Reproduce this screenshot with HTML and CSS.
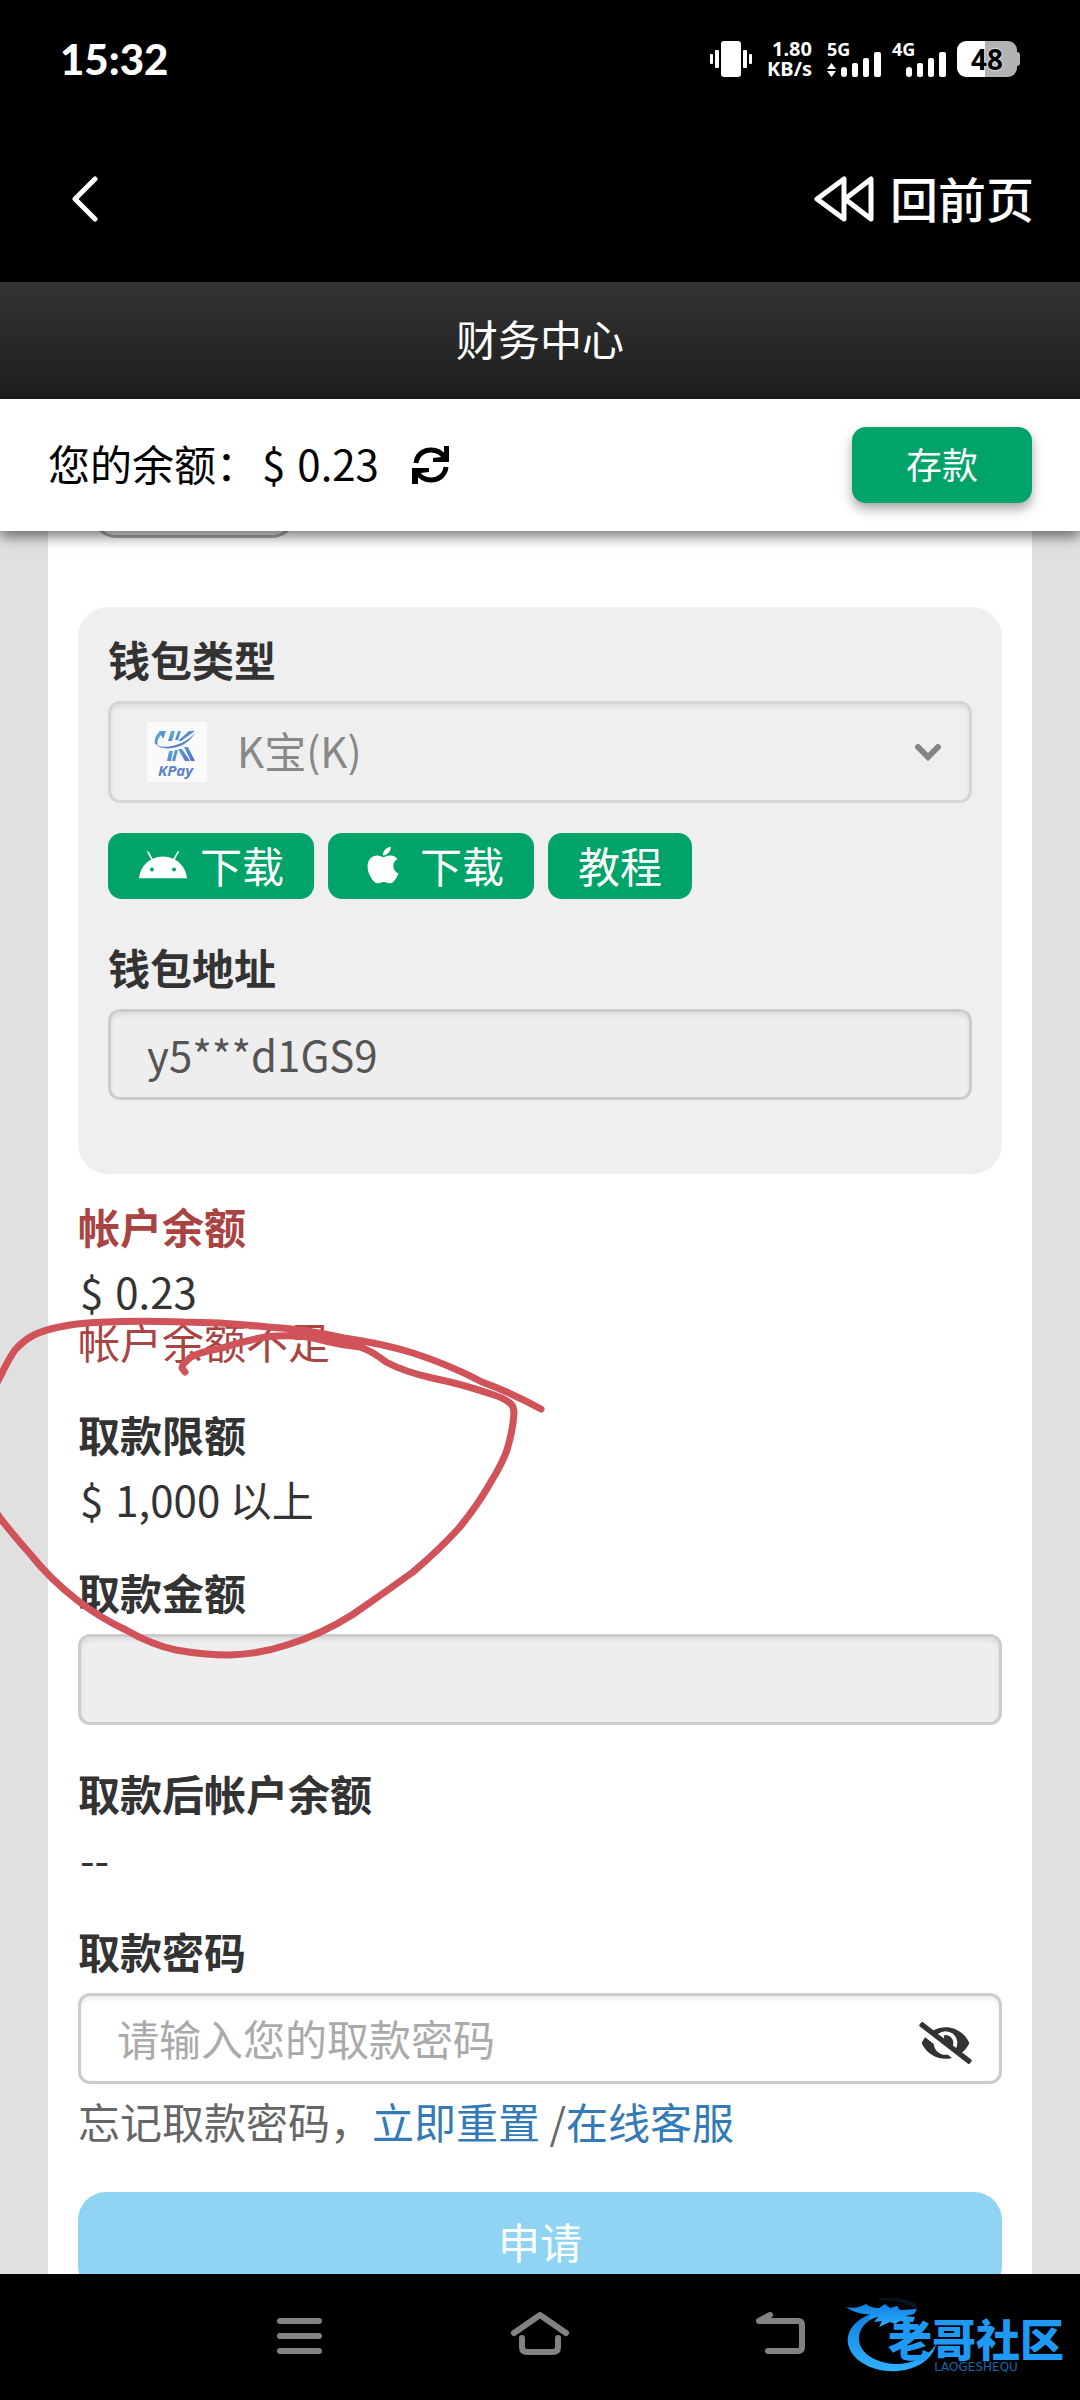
FILE: index.html
```html
<!DOCTYPE html>
<html lang="zh-CN">
<head>
    <meta charset="UTF-8">
    <meta name="viewport" content="width=device-width, initial-scale=1.0">
    <title>财务中心</title>
    <link rel="stylesheet" href="styles.css">
</head>
<body>
    <div class="status-bar">
        <span class="clock">15:32</span>
        <div class="status-icons">
            <svg width="42" height="36" viewBox="0 0 42 36" fill="#fff">
                <rect x="11" y="0" width="20" height="36" rx="3"/>
                <rect x="5" y="9" width="4" height="18" rx="1"/>
                <rect x="0" y="13" width="3" height="10" rx="1"/>
                <rect x="33" y="9" width="4" height="18" rx="1"/>
                <rect x="39" y="13" width="3" height="10" rx="1"/>
            </svg>
            <div class="net-speed"><span>1.80</span><span>KB/s</span></div>
            <div class="signal">
                <span class="signal-type">5G</span>
                <svg width="54" height="26" viewBox="0 0 54 26" fill="#fff">
                    <path d="M0 18l4.500-6 4.500 6zM0 20h9l-4.500 6z"/>
                    <rect x="14" y="16" width="6" height="10" rx="3"/>
                    <rect x="25" y="12" width="6" height="14" rx="2"/>
                    <rect x="36" y="7" width="6" height="19" rx="2"/>
                    <rect x="47" y="1" width="7" height="25" rx="2"/>
                </svg>
            </div>
            <div class="signal">
                <span class="signal-type">4G</span>
                <svg width="54" height="26" viewBox="0 0 54 26" fill="#fff">
                    <rect x="14" y="16" width="6" height="10" rx="3"/>
                    <rect x="25" y="12" width="6" height="14" rx="2"/>
                    <rect x="36" y="7" width="6" height="19" rx="2"/>
                    <rect x="47" y="1" width="7" height="25" rx="2"/>
                </svg>
            </div>
            <div class="battery">48</div>
        </div>
    </div>

    <div class="app-bar">
        <button class="icon-button" aria-label="返回">
            <svg width="30" height="46" viewBox="0 0 30 46" fill="none" stroke="#fff" stroke-width="5" stroke-linecap="round" stroke-linejoin="round">
                <path d="M25 3L5 23l20 20"/>
            </svg>
        </button>
        <a class="prev-page" href="#">
            <svg width="60" height="46" viewBox="0 0 60 46" fill="none" stroke="#fff" stroke-width="5" stroke-linecap="round" stroke-linejoin="round">
                <path d="M30 3v40L3 23zM57 3v40L31 23z"/>
            </svg>
            <span class="prev-page-text">回前页</span>
        </a>
    </div>

    <h1 class="page-title">财务中心</h1>

    <div class="balance-bar">
        <div class="balance">
            <span>您的余额：</span>
            <span>$</span>
            <span class="amount">0.23</span>
        </div>
        <button class="icon-button" aria-label="刷新">
            <svg width="38" height="38" viewBox="0 0 38 38">
                <g fill="none" stroke="#000" stroke-width="5">
                    <path d="M4 17C5 9 11 4 19 4c6 0 11 3 14 8"/>
                    <path d="M34 21c-1 8-7 13-15 13-6 0-11-3-14-8"/>
                </g>
                <path d="M32 0h5v16H21v-4l8-1 3-4zM6 38H0V22h17v4l-8 1-3 4z"/>
            </svg>
        </button>
        <button class="deposit">存款</button>
    </div>

    <main class="content">
        <form class="panel">
            <button class="add-wallet" type="button" aria-label="钱包"></button>

            <div class="wallet-card">
                <label class="label" for="wallet-type">钱包类型</label>
                <div class="select-box">
                    <svg width="60" height="60" viewBox="0 0 60 60">
                        <defs>
                            <linearGradient id="kpay-blue" x1="0" y1="0" x2="1" y2="1">
                                <stop offset="0" stop-color="#55b8d8"/>
                                <stop offset="1" stop-color="#5668c8"/>
                            </linearGradient>
                        </defs>
                        <rect width="60" height="60" fill="#fafafa"/>
                        <g fill="url(#kpay-blue)">
                            <path d="M8 22C7 16 10 11 13 10l-2-1h8l-3 8-2-4c-4 4-4 8-3 10z"/>
                            <path d="M8 23c15 5 31-2 40-12C41 24 22 31 8 23z"/>
                            <path d="M24 9h4l-3 10h-4zM31 9h3l-3 9h-3zM42 9h6l-14 10h-3z"/>
                            <path d="M22 29h4l-2 10h-4zM28 28h3l-3 11h-3zM31 27h4l8 12h-5zM37 25h4l7 14h-4z"/>
                        </g>
                        <text class="kpay-name" x="11" y="54">KPay</text>
                    </svg>
                    <select id="wallet-type" disabled>
                        <option>K宝(K)</option>
                    </select>
                    <svg width="28" height="20" viewBox="0 0 28 20" fill="none" stroke="#848484" stroke-width="6" stroke-linecap="round">
                        <path d="M4 5l10 10L24 5"/>
                    </svg>
                </div>

                <div class="downloads">
                    <a class="green-button" href="#">
                        <svg width="50" height="28" viewBox="0 56 576 336" fill="#fff">
                            <path d="M420.550,301.930a24,24,0,1,1,24-24,24,24,0,0,1-24,24m-265.100,0a24,24,0,1,1,24-24,24,24,0,0,1-24,24m273.700-144.480,47.940-83a10,10,0,1,0-17.270-10h0l-48.540,84.070a301.250,301.250,0,0,0-246.560,0L116.180,64.450a10,10,0,1,0-17.270,10h0l47.940,83C64.530,202.220,8.240,285.550,0,384H576c-8.240-98.450-64.540-181.780-146.850-226.550"/>
                        </svg>
                        下载
                    </a>
                    <a class="green-button" href="#">
                        <svg width="50" height="42" viewBox="0 0 384 512" fill="#fff">
                            <path d="M318.700 268.700c-.2-36.700 16.400-64.400 50-84.800-18.800-26.900-47.200-41.700-84.700-44.600-35.500-2.800-74.300 20.700-88.500 20.700-15 0-49.400-19.700-76.400-19.700C63.300 141.200 4 184.800 4 273.500q0 39.300 14.400 81.200c12.800 36.700 59 126.700 107.200 125.200 25.200-.6 43-17.900 75.800-17.900 31.800 0 48.300 17.900 76.400 17.900 48.600-.7 90.400-82.500 102.600-119.300-65.200-30.700-61.700-90-61.700-91.900zm-56.600-164.200c27.300-32.400 24.800-61.900 24-72.500-24.100 1.400-52 16.400-67.900 34.900-17.500 19.800-27.800 44.300-25.600 71.900 26.100 2 49.900-11.400 69.500-34.300z"/>
                        </svg>
                        下载
                    </a>
                    <a class="green-button" href="#">教程</a>
                </div>

                <label class="label" for="wallet-address">钱包地址</label>
                <input class="field" id="wallet-address" type="text" value="y5***d1GS9" disabled>
            </div>

            <div class="group has-error">
                <div class="label">帐户余额</div>
                <div class="value"><span>$</span><span>0.23</span></div>
                <div class="error">帐户余额不足</div>
            </div>

            <div class="group">
                <div class="label">取款限额</div>
                <div class="value"><span>$</span><span>1,000 以上</span></div>
            </div>

            <div class="group">
                <label class="label" for="withdraw-amount">取款金额</label>
                <input class="field" id="withdraw-amount" type="text" disabled>
            </div>

            <div class="group">
                <div class="label">取款后帐户余额</div>
                <div class="value">--</div>
            </div>

            <div class="group">
                <label class="label" for="withdraw-password">取款密码</label>
                <div class="password-box">
                    <input id="withdraw-password" type="password" placeholder="请输入您的取款密码">
                    <button class="icon-button toggle-password" type="button" aria-label="显示密码">
                        <svg width="53" height="42" viewBox="0 0 640 512" fill="#333">
                            <path d="M320 400c-75.850 0-137.250-58.710-142.900-133.110L72.200 185.820c-13.790 17.300-26.480 35.590-36.720 55.590a32.350 32.350 0 0 0 0 29.190C89.710 376.410 197.070 448 320 448c26.910 0 52.870-4 77.890-10.460L346 397.390a144.130 144.130 0 0 1-26 2.610zm313.820 58.100l-110.550-85.440a331.250 331.250 0 0 0 81.250-102.070 32.350 32.350 0 0 0 0-29.190C550.290 135.590 442.930 64 320 64a308.150 308.150 0 0 0-147.320 37.700L45.460 3.370A16 16 0 0 0 23 6.180L3.370 31.450A16 16 0 0 0 6.180 53.900l588.360 454.730a16 16 0 0 0 22.460-2.810l19.640-25.270a16 16 0 0 0-2.820-22.450zm-183.720-142l-39.300-30.380A94.750 94.750 0 0 0 416 256a94.760 94.760 0 0 0-121.310-92.210A47.650 47.650 0 0 1 304 192a46.640 46.640 0 0 1-1.540 10l-73.610-56.890A142.310 142.310 0 0 1 320 112a143.920 143.920 0 0 1 144 144c0 21.630-5.290 41.790-13.900 60.110z"/>
                        </svg>
                    </button>
                </div>
                <p class="hint">忘记取款密码，<a href="#">立即重置</a> /<a href="#">在线客服</a></p>
            </div>

            <button class="submit" type="submit">申请</button>
        </form>

        <!-- hand-drawn circle round the withdrawal limit -->
        <svg class="marker" width="560" height="360" viewBox="0 0 560 360">
            <path d="M541 109Q512 93 482 82Q450 65 413 53Q380 43 344 38Q306 29 268 27Q226 22 184 22Q115 20 77 24Q48 28 34 35Q24 40 15 50Q8 60 0 77L-12 100V200L0 218Q15 237 31 255Q50 279 77 300Q100 318 126 330Q152 345 176 350Q204 355 230 355Q260 354 287 345Q320 335 352 315Q384 293 413 272Q440 249 459 228Q478 205 492 180Q502 164 507 150Q513 130 514 113Q514 107 511 104Q504 98 494 95Q462 84 432 78Q405 72 386 62Q372 51 360 47Q342 45 325 41Q308 36 295 36Q275 35 260 38Q240 42 222 48Q200 52 191 57Q182 64 182 68L185 72"/>
        </svg>
    </main>

    <nav class="nav-bar">
        <button class="icon-button" aria-label="菜单">
            <svg width="60" height="46" viewBox="0 0 60 46" fill="none" stroke="#828282" stroke-width="6" stroke-linecap="round">
                <path d="M10 9h39M10 24h39M10 39h39"/>
            </svg>
        </button>
        <button class="icon-button" aria-label="主页">
            <svg width="60" height="46" viewBox="0 0 60 46" fill="none" stroke="#828282" stroke-width="6" stroke-linecap="round" stroke-linejoin="round">
                <path d="M4 21L30 3l26 18M12 26v9q0 5 5 5h26q5 0 5-5v-9"/>
            </svg>
        </button>
        <button class="icon-button" aria-label="后退">
            <svg width="60" height="46" viewBox="0 0 60 46" fill="none" stroke="#828282" stroke-width="6" stroke-linecap="round" stroke-linejoin="round">
                <path d="M20 3L9 9h39q4 0 4 4v22q0 4-4 4H18"/>
            </svg>
        </button>
        <div class="watermark">
            <svg width="96" height="78" viewBox="0 0 96 78">
                <defs>
                    <linearGradient id="dragon" x1="0" y1="0" x2="0" y2="1">
                        <stop offset="0" stop-color="#0f7fe0"/>
                        <stop offset="1" stop-color="#2fb0ff"/>
                    </linearGradient>
                </defs>
                <g fill="url(#dragon)">
                    <path d="M34 13C10 19 0 32 2 46c4 18 27 29 50 27 20-2 35-12 38-27-9 14-24 20-40 20-22-1-38-12-37-27 1-11 10-19 24-22z"/>
                    <path d="M0 9c8 2 14 0 20-3 4 3 8 4 13 4l6-4 5 4 7-2 3 4 17-1-3 5-9 2 10 1-2 5-13-1-5 3-5-2-11 5 3-6-8 1 4-5-9 2 2-5c-8 1-18-2-25-7z"/>
                    <path d="M28 2c14-4 30-2 42 4 1 2 1 3 0 5-10-7-26-10-42-9z" opacity=".15"/>
                </g>
            </svg>
            <div class="watermark-text">
                <span class="watermark-name">老哥社区</span>
                <span class="watermark-latin">LAOGESHEQU</span>
            </div>
        </div>
    </nav>
</body>
</html>
```

FILE: styles.css
```css
* {
    box-sizing: border-box;
}

body {
    margin: 0;
    height: 100vh;
    display: flex;
    flex-direction: column;
    overflow: hidden;
    font-family: "Noto Sans CJK SC", "Noto Sans", sans-serif;
    font-size: 42px;
    line-height: 50px;
    color: #333;
    background-color: #e0e0e0;
}

button,
input,
select {
    font: inherit;
    color: inherit;
}

svg {
    display: block;
    flex-shrink: 0;
}

a {
    color: #337ab7;
    text-decoration: none;
}

.icon-button {
    padding: 0;
    border: none;
    background: none;
}

/* Phone status bar */
.status-bar {
    height: 118px;
    padding: 0 60px;
    display: flex;
    flex-shrink: 0;
    align-items: center;
    justify-content: space-between;
    background-color: #000;
    color: #fff;
}

.clock {
    font-family: Lato, sans-serif;
    font-size: 42px;
    font-weight: 900;
}

.status-icons {
    display: flex;
    align-items: center;
    gap: 11px;
    font-family: "Noto Sans", sans-serif;
    font-weight: bold;
}

.net-speed {
    display: flex;
    flex-direction: column;
    margin: 0 4px;
    text-align: right;
    font-size: 20px;
    line-height: 20px;
}

.signal {
    position: relative;
    height: 36px;
    display: flex;
    align-items: flex-end;
}

.signal-type {
    position: absolute;
    top: -1px;
    left: 0;
    font-size: 18px;
    line-height: 18px;
}

.battery {
    position: relative;
    width: 60px;
    height: 36px;
    margin-right: 3px;
    border-radius: 9px;
    background: linear-gradient(to right, #fff 47%, #b2b2b2 47%);
    color: #000;
    font-size: 28px;
    line-height: 36px;
    text-align: center;
    text-shadow: 0 0 2px #fff, 0 0 2px #fff;
}

.battery::after {
    content: "";
    position: absolute;
    top: 11px;
    right: -3px;
    width: 3px;
    height: 14px;
    border-radius: 0 3px 3px 0;
    background-color: #b2b2b2;
}

/* App bar */
.app-bar {
    height: 164px;
    padding: 0 46px 2px 70px;
    display: flex;
    flex-shrink: 0;
    align-items: center;
    justify-content: space-between;
    background-color: #000;
}

.prev-page {
    display: flex;
    align-items: center;
    gap: 16px;
    color: #fff;
    font-size: 48px;
    font-weight: 500;
}

.prev-page-text {
    padding-bottom: 4px;
}

.page-title {
    margin: 0;
    padding-bottom: 5px;
    flex-shrink: 0;
    font-size: 42px;
    font-weight: normal;
    line-height: 112px;
    text-align: center;
    color: #fff;
    background: linear-gradient(#333, #1e1e1e);
}

.balance-bar {
    position: relative;
    z-index: 1;
    height: 132px;
    padding: 0 48px;
    display: flex;
    flex-shrink: 0;
    align-items: center;
    background-color: #fff;
    color: #000;
    box-shadow: 0 6px 12px rgba(0, 0, 0, 0.5);
}

.balance {
    display: flex;
    gap: 4px;
    margin-right: 33px;
    padding-bottom: 4px;
}

.amount {
    margin-left: 8px;
}

.deposit {
    width: 180px;
    height: 76px;
    margin-left: auto;
    padding: 0 0 4px;
    border: none;
    border-radius: 14px;
    background-color: #00a368;
    color: #fff;
    font-size: 36px;
    box-shadow: 0 6px 12px rgba(0, 0, 0, 0.35);
}

/* Withdrawal form */
.content {
    position: relative;
    flex: 1;
    min-height: 0;
    padding: 0 48px;
    overflow: hidden;
}

.panel {
    display: flow-root;
    padding: 0 30px;
    background-color: #fff;
}

/* scrolled up behind the balance bar */
.add-wallet {
    display: block;
    width: 204px;
    height: 60px;
    margin: -53px 0 69px 14px;
    border: 3px solid #aaa;
    border-radius: 24px;
    background-color: #eee;
}

.wallet-card {
    padding: 22px 30px 74px;
    border-radius: 30px;
    background-color: #efefef;
}

.label {
    display: block;
    line-height: 60px;
    font-weight: bold;
}

.field,
.select-box,
.password-box {
    width: 100%;
    height: 91px;
    border: 3px solid #ccc;
    border-radius: 12px;
    box-shadow: inset 0 3px 4px rgba(0, 0, 0, 0.08);
}

.field {
    display: block;
    margin-top: 12px;
    padding: 0 36px 2px;
    background-color: #eee;
    color: #555;
}

.select-box {
    height: 102px;
    margin: 12px 0 30px;
    padding: 0 27px 0 36px;
    display: flex;
    align-items: center;
    border-color: #d5d5d5;
}

.select-box select {
    flex: 1;
    min-width: 0;
    height: 60px;
    padding: 0 0 4px 30px;
    border: none;
    background: none;
    appearance: none;
    color: #888;
    opacity: 1;
}

.kpay-name {
    font-family: "Open Sans", sans-serif;
    font-size: 15px;
    font-weight: bold;
    font-style: italic;
    fill: #5f80cc;
}

.downloads {
    display: flex;
    gap: 14px;
    margin-bottom: 38px;
}

.green-button {
    height: 66px;
    padding: 0 30px 2px;
    display: flex;
    align-items: center;
    gap: 12px;
    border-radius: 14px;
    background-color: #00a368;
    color: #fff;
}

.group {
    margin-top: 38px;
}

.wallet-card + .group {
    margin-top: 22px;
}

.value {
    display: flex;
    gap: 12px;
    margin-top: 10px;
    padding-left: 2px;
}

.has-error .label,
.error {
    color: #a94442;
}

.password-box {
    margin-top: 12px;
    padding: 0 27px 0 36px;
    display: flex;
    align-items: center;
}

.password-box input {
    flex: 1;
    min-width: 0;
    padding: 0 0 2px;
    border: none;
    background: none;
}

.password-box input::placeholder {
    color: #aaa;
}

.toggle-password {
    padding-top: 8px;
}

.hint {
    margin: 12px 0 0;
    color: #666;
}

.submit {
    display: block;
    width: 100%;
    height: 102px;
    margin-top: 46px;
    padding: 0 0 4px;
    border: none;
    border-radius: 28px;
    background-color: #8fd4f3;
    color: #fff;
}

.marker {
    position: absolute;
    top: 769px;
    left: 0;
    fill: none;
    stroke: #cf5359;
    stroke-width: 7;
    stroke-linecap: round;
    stroke-linejoin: round;
    pointer-events: none;
}

/* Phone navigation bar */
.nav-bar {
    position: relative;
    height: 126px;
    padding: 0 270px 4px;
    display: flex;
    flex-shrink: 0;
    align-items: center;
    justify-content: space-between;
    background-color: #000;
}

.watermark {
    position: absolute;
    right: 16px;
    bottom: 24px;
    display: flex;
    align-items: flex-end;
}

.watermark-text {
    display: flex;
    flex-direction: column;
    align-items: center;
    margin-left: -54px;
    color: #1e9af5;
}

.watermark-name {
    font-size: 44px;
    font-weight: 900;
    line-height: 40px;
}

.watermark-latin {
    font-family: "DejaVu Sans", sans-serif;
    font-size: 12px;
    line-height: 18px;
    color: #1668a8;
}
```
